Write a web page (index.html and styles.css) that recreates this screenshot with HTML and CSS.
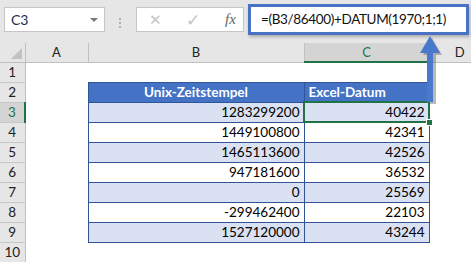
FILE: index.html
```html
<!DOCTYPE html>
<html lang="de">

<head>
  <meta charset="UTF-8" />
  <title>Unix-Zeitstempel</title>
  <link rel="stylesheet" href="styles.css">
</head>

<body>
  <div class="formula-row">
    <div class="name-box">
      <span>C3</span>
      <span class="drop"></span>
    </div>
    <div class="dots"><i></i><i></i><i></i></div>
    <div class="buttons">
      <span class="btn-cancel">✕</span>
      <span class="btn-enter">✓</span>
      <span class="btn-fx">fx</span>
    </div>
    <div class="formula">=(B3/86400)+DATUM(1970;1;1)</div>
  </div>

  <div class="sheet-wrap">
    <table class="sheet">
      <colgroup>
        <col class="w-rh">
        <col class="w-a">
        <col class="w-b">
        <col class="w-c">
        <col class="w-d">
      </colgroup>
      <tr class="col-heads">
        <th class="corner"><span class="tri"></span></th>
        <th>A</th>
        <th>B</th>
        <th class="sel">C</th>
        <th>D</th>
      </tr>
      <tr>
        <th class="rh">1</th><td></td><td></td><td></td><td></td>
      </tr>
      <tr>
        <th class="rh">2</th><td></td>
        <td class="t head center">Unix-Zeitstempel</td>
        <td class="t head">Excel-Datum</td><td></td>
      </tr>
      <tr>
        <th class="rh sel">3</th><td></td>
        <td class="t band num">1283299200</td>
        <td class="t band num active">40422<span class="handle"></span></td><td></td>
      </tr>
      <tr>
        <th class="rh">4</th><td></td>
        <td class="t num">1449100800</td>
        <td class="t num">42341</td><td></td>
      </tr>
      <tr>
        <th class="rh">5</th><td></td>
        <td class="t band num">1465113600</td>
        <td class="t band num">42526</td><td></td>
      </tr>
      <tr>
        <th class="rh">6</th><td></td>
        <td class="t num">947181600</td>
        <td class="t num">36532</td><td></td>
      </tr>
      <tr>
        <th class="rh">7</th><td></td>
        <td class="t band num">0</td>
        <td class="t band num">25569</td><td></td>
      </tr>
      <tr>
        <th class="rh">8</th><td></td>
        <td class="t num">-299462400</td>
        <td class="t num">22103</td><td></td>
      </tr>
      <tr>
        <th class="rh">9</th><td></td>
        <td class="t band num">1527120000</td>
        <td class="t band num">43244</td><td></td>
      </tr>
      <tr>
        <th class="rh">10</th><td></td><td></td><td></td><td></td>
      </tr>
    </table>

    <svg class="arrow" width="26" height="72" viewBox="0 0 26 72">
      <path d="M14 4 L24 21 L18 21 L18 70 L12 70 L12 21 L5 21 Z" fill="#3a3a3a" opacity="0.35" />
      <path d="M12 2 L22 19 L15 19 L15 68 L9 68 L9 19 L2 19 Z" fill="#4a78cc" />
    </svg>
  </div>
</body>

</html>
```

FILE: styles.css
```css
body {
  margin: 0;
  width: 471px;
  height: 262px;
  overflow: hidden;
  background: #e6e6e6;
  font-family: Lato, "Open Sans", sans-serif;
  position: relative;
}

.formula-row {
  display: flex;
  align-items: flex-start;
  height: 43px;
  padding: 4px 0 0 4px;
  box-sizing: border-box;
}

.name-box {
  margin-top: 3px;
  width: 101px;
  height: 25px;
  box-sizing: border-box;
  background: #fff;
  border: 1px solid #c6c6c6;
  display: flex;
  align-items: center;
  justify-content: space-between;
  padding: 0 6px 0 6px;
  font-size: 14px;
  color: #1c2c4c;
}

.name-box .drop {
  width: 0;
  height: 0;
  border-left: 4px solid transparent;
  border-right: 4px solid transparent;
  border-top: 4px solid #7a7a7a;
}

.dots {
  margin: 14px 0 0 14px;
  width: 3px;
  display: flex;
  flex-direction: column;
  gap: 2px;
}

.dots i {
  display: block;
  width: 2px;
  height: 2px;
  background: #b0b0b0;
}

.buttons {
  margin: 3px 0 0 14px;
  width: 108px;
  height: 25px;
  box-sizing: border-box;
  background: #fff;
  border: 1px solid #c6c6c6;
  display: flex;
  align-items: center;
  padding: 0 0 0 12px;
  color: #c4c4c4;
  font-size: 15px;
}

.btn-cancel {
  width: 37px;
}

.btn-enter {
  width: 39px;
  font-size: 17px;
}

.btn-fx {
  font-family: "Liberation Serif", serif;
  font-style: italic;
  color: #666;
  font-size: 15px;
}

.formula {
  margin-left: 4px;
  width: 221px;
  height: 31px;
  box-sizing: border-box;
  border: 3px solid #4a72c4;
  background: #fff;
  box-shadow: 1px 2px 3px rgba(0, 0, 0, 0.25);
  padding: 4px 0 0 10px;
  font-size: 13.5px;
  letter-spacing: -0.35px;
  color: #111;
  white-space: nowrap;
}

.sheet-wrap {
  position: relative;
}

.sheet {
  border-collapse: collapse;
  table-layout: fixed;
  width: 490px;
  font-size: 13px;
  line-height: 15px;
}

.sheet tr {
  height: 20px;
}

.sheet tr.col-heads {
  height: 19px;
}

.w-rh { width: 25px; }
.w-a { width: 63px; }
.w-b { width: 216px; }
.w-c { width: 125px; }
.w-d { width: 61px; }

.sheet th {
  background: #e6e6e6;
  font-weight: normal;
  color: #222;
  padding: 0;
}

.col-heads th {
  border-left: 1px solid #c0c0c0;
  border-bottom: 1px solid #c0c0c0;
  font-size: 13px;
}

.col-heads th.corner {
  border-left: none;
  position: relative;
}

.corner .tri {
  position: absolute;
  right: 3px;
  bottom: 3px;
  width: 0;
  height: 0;
  border-left: 11px solid transparent;
  border-bottom: 11px solid #c2c2c2;
}

.col-heads th.sel {
  background: #d4d4d4;
  color: #217346;
  border-bottom: 2px solid #217346;
}

.sheet th.rh {
  border-bottom: 1px solid #c6c6c6;
  border-right: 1px solid #c0c0c0;
  font-size: 13.5px;
}

.sheet th.rh.sel {
  background: #d4d4d4;
  color: #217346;
  border-right: 2px solid #217346;
}

.sheet td {
  background: #fff;
  padding: 0 4px;
  white-space: nowrap;
}

.sheet td.t {
  border: 1px solid #2f5597;
  font-size: 13.5px;
  color: #000;
}

.sheet td.head {
  background: #4472c4;
  color: #fff;
  font-weight: bold;
}

.sheet td.center {
  text-align: center;
}

.sheet td.band {
  background: #d9e1f2;
}

.sheet td.num {
  text-align: right;
  padding-right: 4px;
}

.sheet td.active {
  position: relative;
  outline: 2px solid #217346;
  outline-offset: -1px;
}

.handle {
  position: absolute;
  right: -4px;
  bottom: -4px;
  width: 5px;
  height: 5px;
  background: #217346;
  border: 1px solid #fff;
}

.arrow {
  position: absolute;
  left: 418px;
  top: -9px;
}
```
